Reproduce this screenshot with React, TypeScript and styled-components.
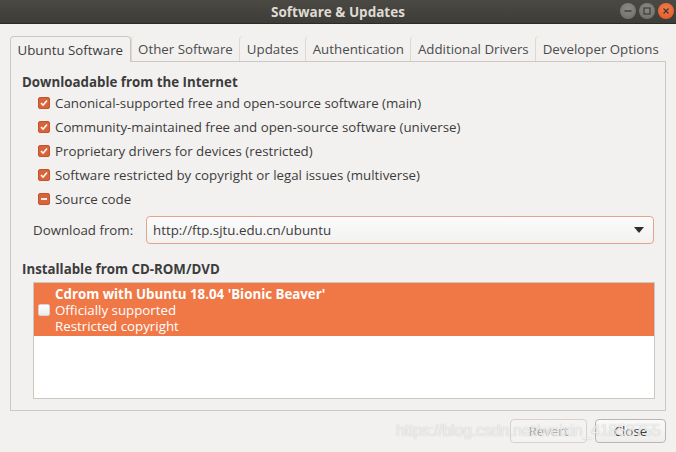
import React from 'react';
import styled, { createGlobalStyle } from 'styled-components';

const GlobalStyle = createGlobalStyle`
  html, body {
    margin: 0;
    padding: 0;
    background: #f2f1f0;
  }
  body {
    font-family: "Open Sans", "Noto Sans", "DejaVu Sans", sans-serif;
    font-size: 13.3px;
    color: #3c3c3c;
  }
`;

const Window = styled.div`
  position: relative;
  width: 676px;
  height: 452px;
  overflow: hidden;
  display: flex;
  flex-direction: column;
  background: #f2f1f0;
`;

const TitleBar = styled.div`
  height: 24px;
  flex: none;
  display: flex;
  align-items: center;
  justify-content: center;
  position: relative;
  background: linear-gradient(to bottom, #4a4944, #3d3c38);
  border-bottom: 1px solid #2c2b28;
  box-sizing: border-box;
`;

const Title = styled.div`
  color: #dfdbd2;
  font-weight: 700;
  font-size: 13.5px;
`;

const Controls = styled.div`
  position: absolute;
  right: 2px;
  top: 3px;
  display: flex;
  gap: 3px;
`;

const Ctl = styled.div<{ $close?: boolean }>`
  width: 16px;
  height: 16px;
  border-radius: 50%;
  display: flex;
  align-items: center;
  justify-content: center;
  background: ${(p) =>
    p.$close
      ? 'radial-gradient(circle at 50% 35%, #f47a4c, #e3571f)'
      : 'radial-gradient(circle at 50% 35%, #8b8a85, #6b6a66)'};
`;

const Body = styled.div`
  flex: 1;
  display: flex;
  flex-direction: column;
  padding: 12px 10px 0 10px;
`;

const Tabs = styled.div`
  display: flex;
  height: 25px;
  position: relative;
  z-index: 1;
`;

const Tab = styled.div<{ $active?: boolean }>`
  height: ${(p) => (p.$active ? '26px' : '25px')};
  box-sizing: border-box;
  padding: 0 6.5px;
  display: flex;
  align-items: center;
  white-space: nowrap;
  color: ${(p) => (p.$active ? '#3c3c3c' : '#4c4c4c')};
  border: ${(p) => (p.$active ? '1px solid #cdc7c2' : 'none')};
  border-bottom: none;
  border-radius: 4px 4px 0 0;
  background: ${(p) => (p.$active ? '#f2f1f0' : 'transparent')};
  & + & {
    border-left: 1px solid ${(p) => (p.$active ? '#cdc7c2' : '#dcd8d4')};
  }
`;

const Panel = styled.div`
  height: 350px;
  box-sizing: border-box;
  border: 1px solid #cdc7c2;
  background: #f2f1f0;
  padding: 11px 11px 0 11px;
  display: flex;
  flex-direction: column;
`;

const Heading = styled.div<{ $gap?: number }>`
  font-weight: 700;
  line-height: 18px;
  margin-top: ${(p) => p.$gap ?? 0}px;
`;

const CheckList = styled.div`
  display: flex;
  flex-direction: column;
  margin-left: 16px;
`;

const CheckRow = styled.div`
  height: 24px;
  display: flex;
  align-items: center;
  gap: 5px;
`;

const Box = styled.div<{ $light?: boolean }>`
  width: 12px;
  height: 12px;
  flex: none;
  border-radius: 2px;
  box-sizing: border-box;
  display: flex;
  align-items: center;
  justify-content: center;
  background: ${(p) => (p.$light ? 'linear-gradient(#ffffff, #ecebea)' : '#d9643a')};
  border: 1px solid ${(p) => (p.$light ? '#d8d3ce' : '#c25530')};
`;

const FromRow = styled.div`
  display: flex;
  align-items: center;
  margin-top: 5px;
  margin-left: 11px;
  height: 28px;
`;

const FromLabel = styled.div`
  width: 113px;
  flex: none;
`;

const Combo = styled.div`
  flex: 1;
  height: 28px;
  box-sizing: border-box;
  border: 1px solid #e3a58a;
  border-radius: 4px;
  background: linear-gradient(#fbfbfb, #f3f2f1);
  display: flex;
  align-items: center;
  justify-content: space-between;
  padding: 0 9px 0 6px;
`;

const ListBox = styled.div`
  margin: 4px -1px 0 11px;
  height: 117px;
  box-sizing: border-box;
  border: 1px solid #cdc7c2;
  background: #ffffff;
`;

const Item = styled.div`
  background: #f07746;
  color: #ffffff;
  display: flex;
  align-items: center;
  padding: 3px 0 2px 4px;
  gap: 5px;
`;

const ItemText = styled.div`
  display: flex;
  flex-direction: column;
  line-height: 16px;
`;

const ItemTitle = styled.div`
  font-weight: 700;
`;

const Footer = styled.div`
  display: flex;
  justify-content: flex-end;
  gap: 8px;
  margin-top: 8px;
`;

const Button = styled.div<{ $disabled?: boolean; $w: number }>`
  width: ${(p) => p.$w}px;
  height: 24px;
  box-sizing: border-box;
  border: 1px solid ${(p) => (p.$disabled ? '#d6d1cd' : '#bcb5af')};
  border-radius: 4px;
  background: ${(p) => (p.$disabled ? '#f4f3f2' : 'linear-gradient(#fafafa, #efedec)')};
  color: ${(p) => (p.$disabled ? '#a7a39f' : '#3c3c3c')};
  display: flex;
  align-items: center;
  justify-content: center;
`;

const Watermark = styled.div`
  position: absolute;
  left: 396px;
  top: 422px;
  font-family: "Liberation Sans", Arial, sans-serif;
  font-size: 16px;
  letter-spacing: -0.2px;
  color: rgba(255, 255, 255, 0.75);
  text-shadow: 0 0 1px rgba(120, 120, 120, 0.5);
  white-space: nowrap;
  pointer-events: none;
`;

const Check = () => (
  <svg width="8" height="8" viewBox="0 0 8 8">
    <path d="M1 4.2 L3.1 6.2 L7 1.6" fill="none" stroke="#fff" strokeWidth="1.6" />
  </svg>
);

const Dash = () => (
  <svg width="8" height="8" viewBox="0 0 8 8">
    <path d="M1 4 H7" stroke="#fff" strokeWidth="1.8" />
  </svg>
);

const sources = [
  'Canonical-supported free and open-source software (main)',
  'Community-maintained free and open-source software (universe)',
  'Proprietary drivers for devices (restricted)',
  'Software restricted by copyright or legal issues (multiverse)',
];

const tabs = [
  'Ubuntu Software',
  'Other Software',
  'Updates',
  'Authentication',
  'Additional Drivers',
  'Developer Options',
];

export default function App() {
  return (
    <Window>
      <GlobalStyle />
      <TitleBar>
        <Title>Software &amp; Updates</Title>
        <Controls>
          <Ctl>
            <svg width="8" height="8" viewBox="0 0 8 8">
              <path d="M0.5 4 H7.5" stroke="#3c3b37" strokeWidth="1.4" />
            </svg>
          </Ctl>
          <Ctl>
            <svg width="8" height="8" viewBox="0 0 8 8">
              <rect x="1" y="1" width="6" height="6" fill="none" stroke="#3c3b37" strokeWidth="1.2" />
            </svg>
          </Ctl>
          <Ctl $close>
            <svg width="8" height="8" viewBox="0 0 8 8">
              <path d="M1.5 1.5 L6.5 6.5 M6.5 1.5 L1.5 6.5" stroke="#3c3b37" strokeWidth="1.4" />
            </svg>
          </Ctl>
        </Controls>
      </TitleBar>
      <Body>
        <Tabs>
          {tabs.map((t, i) => (
            <Tab key={t} $active={i === 0}>
              {t}
            </Tab>
          ))}
        </Tabs>
        <Panel>
          <Heading>Downloadable from the Internet</Heading>
          <CheckList>
            {sources.map((s) => (
              <CheckRow key={s}>
                <Box>
                  <Check />
                </Box>
                {s}
              </CheckRow>
            ))}
            <CheckRow>
              <Box>
                <Dash />
              </Box>
              Source code
            </CheckRow>
          </CheckList>
          <FromRow>
            <FromLabel>Download from:</FromLabel>
            <Combo>
              <span>http://ftp.sjtu.edu.cn/ubuntu</span>
              <svg width="10" height="6" viewBox="0 0 10 6">
                <path d="M0 0 H10 L5 6 Z" fill="#2e2e2e" />
              </svg>
            </Combo>
          </FromRow>
          <Heading $gap={16}>Installable from CD-ROM/DVD</Heading>
          <ListBox>
            <Item>
              <Box $light />
              <ItemText>
                <ItemTitle>Cdrom with Ubuntu 18.04 'Bionic Beaver'</ItemTitle>
                <div>Officially supported</div>
                <div>Restricted copyright</div>
              </ItemText>
            </Item>
          </ListBox>
        </Panel>
        <Footer>
          <Button $disabled $w={77}>
            Revert
          </Button>
          <Button $w={71}>Close</Button>
        </Footer>
      </Body>
      <Watermark>https://blog.csdn.net/weixin_41858755</Watermark>
    </Window>
  );
}
